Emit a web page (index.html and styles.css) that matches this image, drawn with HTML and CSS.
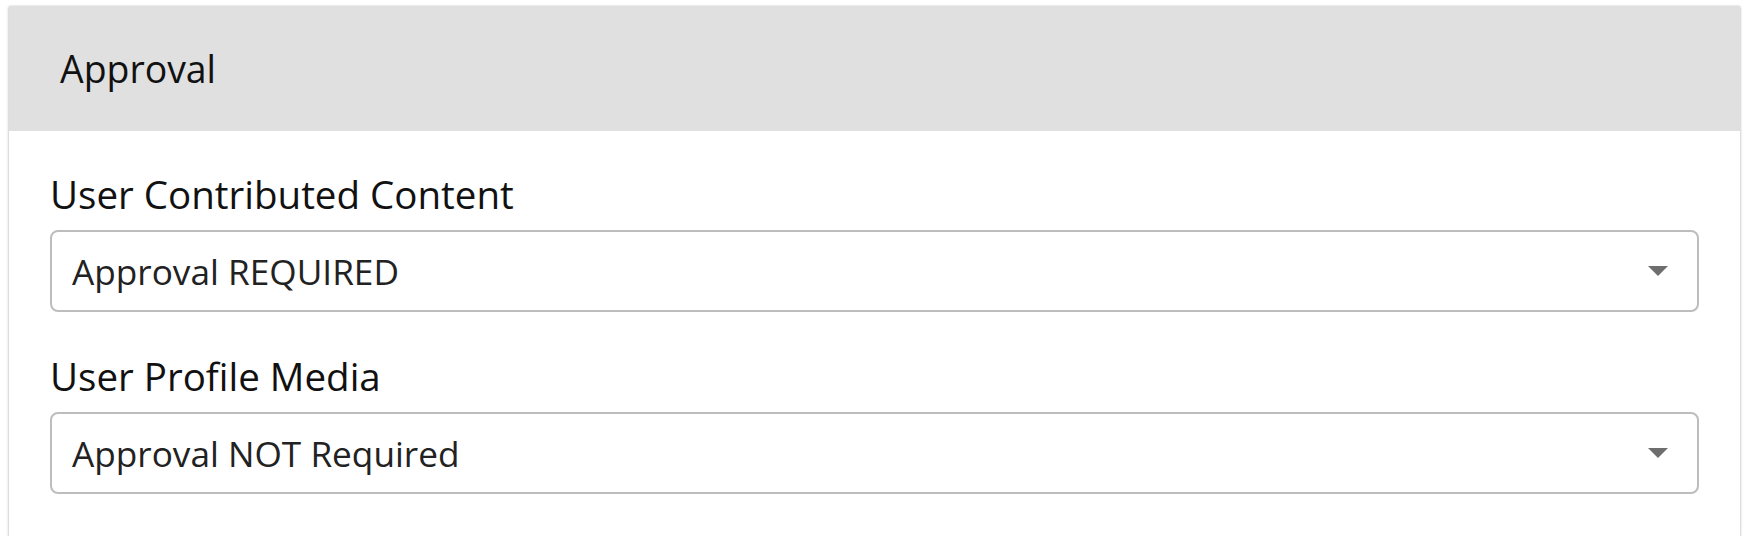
FILE: index.html
```html
<!DOCTYPE html>
<html lang="en">
<head>
<meta charset="utf-8">
<title>Approval</title>
<link rel="stylesheet" href="styles.css">
</head>
<body>
<section class="card">
  <header class="card-header">Approval</header>
  <div class="card-body">
    <div class="field">
      <label class="field-label">User Contributed Content</label>
      <div class="select">
        <span class="select-value">Approval REQUIRED</span>
        <span class="select-arrow"></span>
      </div>
    </div>
    <div class="field">
      <label class="field-label">User Profile Media</label>
      <div class="select">
        <span class="select-value">Approval NOT Required</span>
        <span class="select-arrow"></span>
      </div>
    </div>
  </div>
</section>
</body>
</html>
```

FILE: styles.css
```css
html, body {
  margin: 0;
  padding: 0;
  background: #ffffff;
}

body {
  font-family: "Open Sans", "Noto Sans", sans-serif;
  color: #111111;
  padding: 6px 7px 0 9px;
}

.card {
  width: 1731px;
  height: 530px;
  box-sizing: border-box;
  background: #ffffff;
  box-shadow: 0 1px 3px rgba(0, 0, 0, 0.28), 0 0 1px rgba(0, 0, 0, 0.18);
  display: flex;
  flex-direction: column;
}

.card-header {
  height: 125px;
  flex: none;
  background: #e0e0e0;
  display: flex;
  align-items: center;
  padding-left: 51px;
  font-size: 37.4px;
  color: #111111;
}

.card-body {
  padding: 43px 41px 0 41px;
  display: flex;
  flex-direction: column;
  gap: 44px;
}

.field {
  display: flex;
  flex-direction: column;
}

.field-label {
  font-size: 38.5px;
  line-height: 40px;
  margin-bottom: 16px;
  color: #111111;
}

.select {
  height: 82px;
  box-sizing: border-box;
  border: 2px solid #bdbdbd;
  border-radius: 8px;
  display: flex;
  align-items: center;
  justify-content: space-between;
  padding: 0 29px 0 20px;
}

.select-value {
  font-size: 35.2px;
  color: #222222;
}

.select-arrow {
  width: 0;
  height: 0;
  border-left: 10px solid transparent;
  border-right: 10px solid transparent;
  border-top: 10px solid #6e6e6e;
}
```
